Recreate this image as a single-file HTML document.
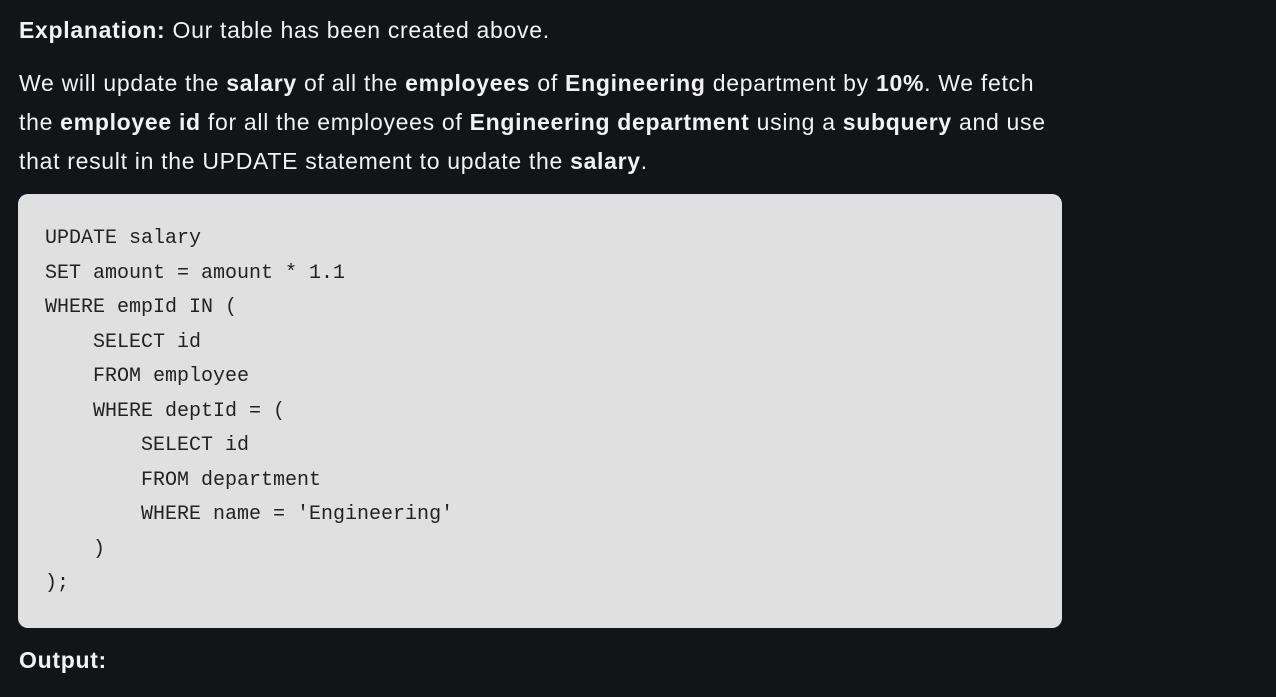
<!DOCTYPE html>
<html><head><style>
html,body{margin:0;padding:0;background:#131417;width:1276px;height:697px;overflow:hidden}
body{font-family:"Liberation Sans",sans-serif;color:#f2f2f2;font-size:23px;letter-spacing:0.7px}
p{margin:0;position:absolute;left:19px;line-height:39px;white-space:nowrap}
b{font-weight:bold}
.code{position:absolute;left:18px;top:194px;width:1044px;height:434px;background:#e0e0e0;border-radius:10px}
pre{margin:0;position:absolute;left:27px;top:28px;font-family:"Liberation Mono","DejaVu Sans Mono",monospace;font-size:20px;line-height:34.5px;color:#222;letter-spacing:0}
</style></head><body>
<p style="top:11px"><b>Explanation:</b> Our table has been created above.</p>
<p style="top:64px">We will update the <b>salary</b> of all the <b>employees</b> of <b>Engineering</b> department by <b>10%</b>. We fetch<br>the <b>employee id</b> for all the employees of <b>Engineering department</b> using a <b>subquery</b> and use<br>that result in the UPDATE statement to update the <b>salary</b>.</p>
<div class="code"><pre>UPDATE salary
SET amount = amount * 1.1
WHERE empId IN (
    SELECT id
    FROM employee
    WHERE deptId = (
        SELECT id
        FROM department
        WHERE name = 'Engineering'
    )
);</pre></div>
<p style="top:641px"><b>Output:</b></p>
</body></html>
